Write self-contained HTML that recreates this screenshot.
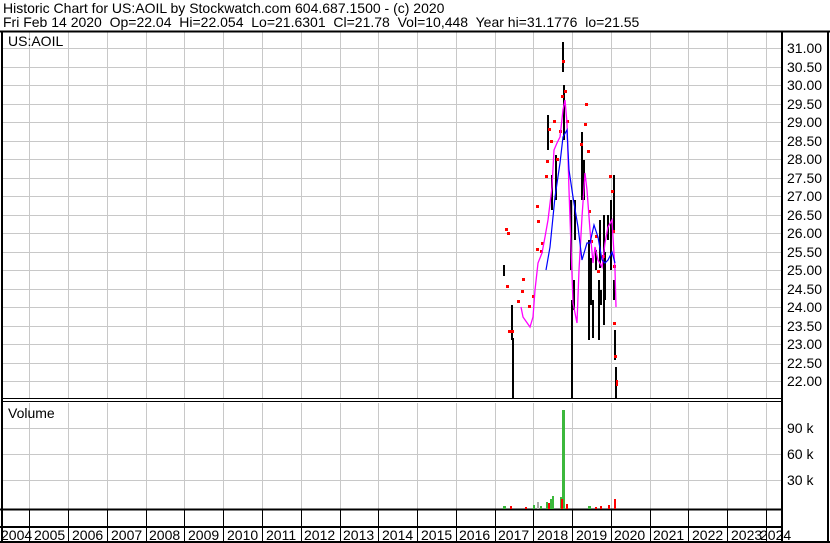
<!DOCTYPE html>
<html><head><style>
body{margin:0;background:#fff;width:830px;height:543px;overflow:hidden;font-family:"Liberation Sans",Arial,sans-serif}
</style></head><body>
<svg width="830" height="543" xmlns="http://www.w3.org/2000/svg" style="position:absolute;left:0;top:0" font-family="Liberation Sans, Arial, sans-serif" font-size="13">
<rect width="830" height="543" fill="#fff"/>
<text x="3" y="13" fill="#000" font-size="14" style="white-space:pre">Historic Chart for US:AOIL by Stockwatch.com 604.687.1500 - (c) 2020</text>
<text x="3" y="27" fill="#000" font-size="14" style="white-space:pre">Fri Feb 14 2020  Op=22.04  Hi=22.054  Lo=21.6301  Cl=21.78  Vol=10,448  Year hi=31.1776  lo=21.55</text>
<g stroke="#c8c8c8" stroke-width="1">
<path d="M29.5 32V399M68.5 32V399M107.5 32V399M146.5 32V399M184.5 32V399M223.5 32V399M262.5 32V399M301.5 32V399M340.5 32V399M378.5 32V399M417.5 32V399M456.5 32V399M495.5 32V399M533.5 32V399M572.5 32V399M611.5 32V399M650.5 32V399M688.5 32V399M727.5 32V399M766.5 32V399"/>
<path d="M29.5 403V509M68.5 403V509M107.5 403V509M146.5 403V509M184.5 403V509M223.5 403V509M262.5 403V509M301.5 403V509M340.5 403V509M378.5 403V509M417.5 403V509M456.5 403V509M495.5 403V509M533.5 403V509M572.5 403V509M611.5 403V509M650.5 403V509M688.5 403V509M727.5 403V509M766.5 403V509"/>
<path d="M3 48.5H781M3 67.5H781M3 85.5H781M3 104.5H781M3 122.5H781M3 141.5H781M3 159.5H781M3 178.5H781M3 196.5H781M3 215.5H781M3 233.5H781M3 252.5H781M3 270.5H781M3 289.5H781M3 307.5H781M3 326.5H781M3 344.5H781M3 363.5H781M3 381.5H781"/>
<path d="M3 428.5H781M3 454.5H781M3 480.5H781"/>
</g>
<g stroke="#000" fill="none">
<path d="M0 31.5H830" stroke-width="2"/>
<path d="M2 32V542" stroke-width="2"/>
<path d="M782 32V542" stroke-width="2"/>
<path d="M3 398.5H781M3 401.5H781" stroke-width="1"/>
<path d="M0 509.5H781" stroke-width="2"/>
<path d="M0 527H781" stroke-width="2"/>
<path d="M0 542H830" stroke-width="2"/>
<path d="M828 32V542" stroke-width="2"/>
<path d="M29.5 510V541M68.5 510V541M107.5 510V541M146.5 510V541M184.5 510V541M223.5 510V541M262.5 510V541M301.5 510V541M340.5 510V541M378.5 510V541M417.5 510V541M456.5 510V541M495.5 510V541M533.5 510V541M572.5 510V541M611.5 510V541M650.5 510V541M688.5 510V541M727.5 510V541M766.5 510V541"/>
</g>
<text x="8" y="46" fill="#000" font-size="14">US:AOIL</text>
<text x="8" y="418" fill="#000" font-size="14">Volume</text>
<g fill="#000" font-size="14">
<text x="787" y="53">31.00</text><text x="787" y="72">30.50</text><text x="787" y="90">30.00</text><text x="787" y="109">29.50</text><text x="787" y="127">29.00</text><text x="787" y="146">28.50</text><text x="787" y="164">28.00</text><text x="787" y="183">27.50</text><text x="787" y="201">27.00</text><text x="787" y="220">26.50</text><text x="787" y="238">26.00</text><text x="787" y="257">25.50</text><text x="787" y="275">25.00</text><text x="787" y="294">24.50</text><text x="787" y="312">24.00</text><text x="787" y="331">23.50</text><text x="787" y="349">23.00</text><text x="787" y="368">22.50</text><text x="787" y="386">22.00</text>
<text x="787" y="433">90 k</text><text x="787" y="459">60 k</text><text x="787" y="485">30 k</text>
</g>
<g fill="#000" font-size="14">
<text x="1" y="540">2004</text><text x="34" y="540">2005</text><text x="72" y="540">2006</text><text x="111" y="540">2007</text><text x="149" y="540">2008</text><text x="188" y="540">2009</text><text x="227" y="540">2010</text><text x="266" y="540">2011</text><text x="304" y="540">2012</text><text x="343" y="540">2013</text><text x="382" y="540">2014</text><text x="421" y="540">2015</text><text x="459" y="540">2016</text><text x="498" y="540">2017</text><text x="537" y="540">2018</text><text x="576" y="540">2019</text><text x="614" y="540">2020</text><text x="653" y="540">2021</text><text x="692" y="540">2022</text><text x="731" y="540">2023</text><text x="760" y="540">2024</text>
</g>
<g stroke="#000" stroke-width="2">
<path d="M504 265V276M513 338V398M512 305V340M563 42V72M564 85V140M548 115V150M552 175V210M556 155V200M571 200V270M572 300V398M575 200V240M574 280V310M582 132V200M584 160V200M589 240V340M591 285V305M593 300V338M591 258V298M596 250V270M600 220V268M599 280V340M601 290V305M604 215V325M605 252V300M608 215V240M611 200V270M614 175V230M615 330V360M616 367V398M614 280V300"/>
</g>
<g fill="#f00">
<rect x="505" y="228" width="3" height="3"/><rect x="507" y="232" width="3" height="3"/><rect x="506" y="285" width="3" height="3"/><rect x="508" y="330" width="3" height="3"/><rect x="511" y="330" width="3" height="3"/><rect x="517" y="300" width="3" height="3"/><rect x="522" y="278" width="3" height="3"/><rect x="521" y="290" width="3" height="3"/><rect x="528" y="305" width="3" height="3"/><rect x="532" y="295" width="3" height="3"/><rect x="536" y="248" width="3" height="3"/><rect x="536" y="205" width="3" height="3"/><rect x="537" y="220" width="3" height="3"/><rect x="541" y="242" width="3" height="3"/><rect x="540" y="250" width="3" height="3"/><rect x="545" y="175" width="3" height="3"/><rect x="546" y="160" width="3" height="3"/><rect x="548" y="128" width="3" height="3"/><rect x="550" y="140" width="3" height="3"/><rect x="553" y="120" width="3" height="3"/><rect x="556" y="158" width="3" height="3"/><rect x="559" y="130" width="3" height="3"/><rect x="561" y="95" width="3" height="3"/><rect x="562" y="60" width="3" height="3"/><rect x="564" y="90" width="3" height="3"/><rect x="566" y="120" width="3" height="3"/><rect x="585" y="103" width="3" height="3"/><rect x="584" y="123" width="3" height="3"/><rect x="587" y="150" width="3" height="3"/><rect x="580" y="143" width="3" height="3"/><rect x="588" y="210" width="3" height="3"/><rect x="590" y="240" width="3" height="3"/><rect x="595" y="235" width="3" height="3"/><rect x="597" y="270" width="3" height="3"/><rect x="602" y="255" width="3" height="3"/><rect x="609" y="175" width="3" height="3"/><rect x="611" y="190" width="3" height="3"/><rect x="612" y="230" width="3" height="3"/><rect x="613" y="265" width="3" height="3"/><rect x="613" y="322" width="3" height="3"/><rect x="614" y="355" width="3" height="3"/><rect x="616" y="380" width="2" height="6"/>
</g>
<polyline fill="none" stroke="#f0f" stroke-width="1.3" points="521,307 523,317 530,327 533,317 535,290 538,263 542,253 545,237 548,220 552,187 554,150 557,143 560,137 563,110 565,100 567,123 569,190 571,247 573,303 577,323 579,270 582,217 585,173 587,190 590,230 593,263 595,247 598,260 602,267 605,243 608,227 612,220 613,237 615,270 616,307"/>
<polyline fill="none" stroke="#00f" stroke-width="1.2" points="546,270 550,247 555,197 560,163 563,137 567,130 569,170 573,197 578,227 582,260 587,243 590,243 594,225 598,237 602,260 605,263 608,260 612,252 615,263"/>
<g fill="#3cb83c">
<rect x="562" y="410" width="3" height="99"/><rect x="552" y="496" width="2" height="13"/><rect x="550" y="499" width="2" height="10"/><rect x="546" y="502" width="2" height="7"/><rect x="560" y="497" width="2" height="12"/><rect x="533" y="505" width="2" height="4"/><rect x="503" y="506" width="3" height="3"/><rect x="540" y="506" width="2" height="3"/><rect x="588" y="506" width="3" height="3"/>
</g>
<g fill="#f00">
<rect x="614" y="499" width="2" height="10"/><rect x="548" y="503" width="2" height="6"/><rect x="561" y="499" width="2" height="10"/><rect x="566" y="504" width="2" height="5"/><rect x="608" y="505" width="2" height="4"/><rect x="510" y="506" width="2" height="3"/><rect x="525" y="507" width="2" height="2"/><rect x="595" y="507" width="2" height="2"/><rect x="600" y="506" width="2" height="3"/>
</g>
<rect x="537" y="502" width="2" height="7" fill="#aaa"/>
</svg>
</body></html>
